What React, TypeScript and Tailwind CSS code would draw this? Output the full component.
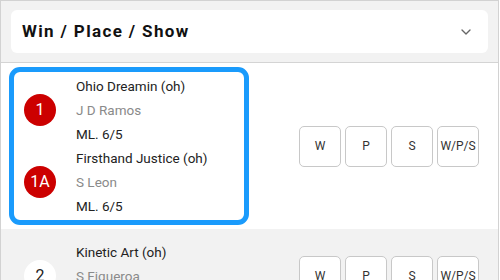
import { ChevronDown } from 'lucide-react';

type Entry = { num: string; name: string; jockey: string; ml: string };

const rows: { selected: boolean; entries: Entry[] }[] = [
  {
    selected: true,
    entries: [
      { num: '1', name: 'Ohio Dreamin (oh)', jockey: 'J D Ramos', ml: 'ML. 6/5' },
      { num: '1A', name: 'Firsthand Justice (oh)', jockey: 'S Leon', ml: 'ML. 6/5' },
    ],
  },
  {
    selected: false,
    entries: [{ num: '2', name: 'Kinetic Art (oh)', jockey: 'S Figueroa', ml: 'ML. 5/2' }],
  },
];

const EntryLine = ({ entry, red }: { entry: Entry; red: boolean }) => (
  <div className="flex items-center h-[72px]">
    <div
      className={
        red
          ? 'ml-2 w-8 h-8 rounded-full bg-[#cc0000] text-white flex items-center justify-center text-[16px]'
          : 'ml-2 w-8 h-8 rounded-full bg-white text-[#222] flex items-center justify-center text-[16px]'
      }
    >
      {entry.num}
    </div>
    <div className="ml-[20px] flex flex-col text-[13.5px] leading-[24px]">
      <span className="text-[#222]">{entry.name}</span>
      <span className="text-[#8a8a8a]">{entry.jockey}</span>
      <span className="text-[#222]">{entry.ml}</span>
    </div>
  </div>
);

export default function App() {
  return (
    <div
      className="w-[499px] h-[280px] overflow-hidden border-t border-l border-r border-[#d2d2d2] bg-white"
      style={{ fontFamily: 'Roboto, "Noto Sans", sans-serif' }}
    >
      {/* Bet type header */}
      <div className="bg-[#f2f2f2] px-[10px] pt-[9px] pb-[9px] border-b border-[#d4d4d4]">
        <div className="h-[43px] bg-white rounded-[6px] flex items-center pl-[11px] pr-[14px]">
          <span className="text-[17px] font-bold tracking-[0.08em] text-[#111]">Win / Place / Show</span>
          <ChevronDown className="ml-auto text-[#666]" size={16} strokeWidth={2} />
        </div>
      </div>

      {rows.map((row, i) => (
        <div key={i} className={row.selected ? 'flex items-center bg-white px-2' : 'flex items-center bg-[#f2f2f2] px-2'}>
          <div
            className={
              row.selected
                ? 'my-1 w-[240px] border-[5px] border-[#1a9bfc] rounded-[11px] p-[2px]'
                : 'my-1 w-[240px] border-[5px] border-transparent rounded-[11px] p-[2px]'
            }
          >
            {row.entries.map((e) => (
              <EntryLine key={e.num} entry={e} red={row.selected} />
            ))}
          </div>
          <div className="ml-auto mr-[11px] flex gap-1">
            {['W', 'P', 'S', 'W/P/S'].map((b) => (
              <button
                key={b}
                className="w-[42px] h-[41px] bg-white border border-[#c8c8c8] rounded-[5px] text-[12px] text-[#333] flex items-center justify-center"
              >
                {b}
              </button>
            ))}
          </div>
        </div>
      ))}
    </div>
  );
}
